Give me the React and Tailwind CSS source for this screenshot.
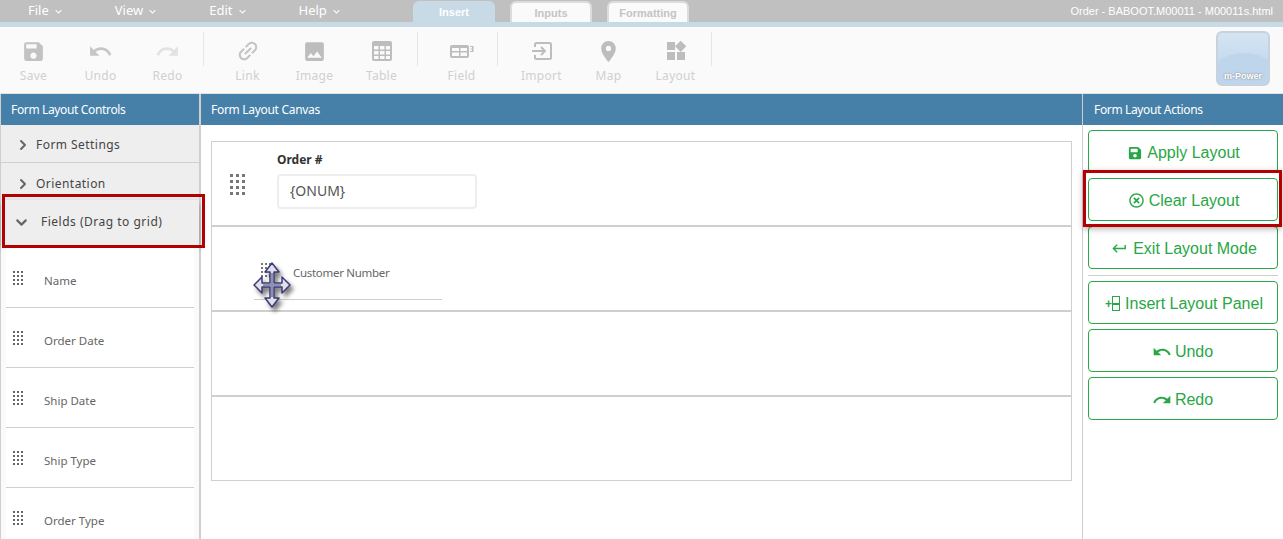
import { MdSave, MdUndo, MdRedo, MdLink, MdImage, MdPlace, MdWidgets, MdKeyboardReturn, MdKeyboardArrowDown } from 'react-icons/md';
import { FaSave, FaRegTimesCircle } from 'react-icons/fa';
import { FiChevronRight, FiChevronDown } from 'react-icons/fi';

const TableIcon = () => (
  <svg width="22" height="22" viewBox="0 0 22 22" fill="#bdbdbd">
    <path d="M3 1h16a2 2 0 0 1 2 2v16a2 2 0 0 1-2 2H3a2 2 0 0 1-2-2V3a2 2 0 0 1 2-2zm0 5v3.500h4.500V6zm6 0v3.500h4.500V6zm6 0v3.500h4V6zM3 11v3.500h4.500V11zm6 0v3.500h4.500V11zm6 0v3.500h4V11zM3 16v3h4.500v-3zm6 0v3h4.500v-3zm6 0v3h4v-3z" fillRule="evenodd" />
  </svg>
);

const FieldIcon = () => (
  <svg width="24" height="16" viewBox="0 0 24 16" fill="#bdbdbd">
    <path d="M2 2h15a2 2 0 0 1 2 2v9a2 2 0 0 1-2 2H2a2 2 0 0 1-2-2V4a2 2 0 0 1 2-2zm0 3v3h7V5zm8.500 0v3H17V5zM2 9.500V13h7V9.500zm8.500 0V13H17V9.500z" fillRule="evenodd" />
    <path d="M20 3h3.500v6H20V8h2V6.500h-1.500v-1H22V4h-2z" />
  </svg>
);

const ImportIcon = () => (
  <svg width="20" height="18" viewBox="0 0 20 18" fill="none" stroke="#bdbdbd" strokeWidth="2">
    <path d="M3 5V2.500A1.500 1.500 0 0 1 4.500 1h13A1.500 1.500 0 0 1 19 2.500v13a1.500 1.500 0 0 1-1.500 1.500h-13A1.500 1.500 0 0 1 3 15.500V13" />
    <path d="M0 9h12M9 5l4 4-4 4" />
  </svg>
);

// 3 columns, 4 rows of square dots
const Grip = ({ size = 2, gap = 2, color = 'bg-[#666]', className = '' }) => (
  <div className={`grid w-fit grid-cols-3 content-start self-start ${className}`} style={{ gap }}>
    {Array.from({ length: 12 }).map((_, i) => (
      <span key={i} className={color} style={{ width: size, height: size }} />
    ))}
  </div>
);

const groups = [
  [
    { label: 'Save', icon: <MdSave size={25} color="#c2c2c2" /> },
    { label: 'Undo', icon: <MdUndo size={25} color="#c6c6c6" /> },
    { label: 'Redo', icon: <MdRedo size={25} color="#e2e2e2" /> },
  ],
  [
    { label: 'Link', icon: <MdLink size={26} color="#c4c4c4" className="-rotate-45" /> },
    { label: 'Image', icon: <MdImage size={25} color="#bdbdbd" /> },
    { label: 'Table', icon: <TableIcon /> },
  ],
  [{ label: 'Field', icon: <FieldIcon /> }],
  [
    { label: 'Import', icon: <ImportIcon /> },
    { label: 'Map', icon: <MdPlace size={25} color="#bdbdbd" /> },
    { label: 'Layout', icon: <MdWidgets size={24} color="#bdbdbd" /> },
  ],
];

const fields = ['Name', 'Order Date', 'Ship Date', 'Ship Type', 'Order Type'];

const ActionButton = ({ icon, children }) => (
  <button className="flex h-[43px] w-[190px] items-center justify-center gap-[5px] rounded border border-[#28a745] bg-white pl-[2px] pt-[2px] text-[16px] text-[#28a745]">
    {icon}
    <span>{children}</span>
  </button>
);

const MoveCursor = () => (
  <svg width="40" height="46" viewBox="0 0 40 46" className="drop-shadow-[3px_4px_2px_rgba(0,0,0,0.5)]">
    <path d="M19 1L26 10H21V21H29V15L37 23L29 31V25H21V36H26L19 45L12 36H17V25H9V31L1 23L9 15V21H17V10H12Z" fill="#dfe0e8" stroke="#3b3b78" strokeWidth="1.500" strokeLinejoin="round" />
    <path d="M19 11V35M10 23H28" stroke="#8f8fb0" strokeWidth="2" />
  </svg>
);

export default function App() {
  return (
    <div className="relative h-[539px] w-[1283px] overflow-hidden bg-white font-['Noto_Sans',sans-serif]">
      {/* menu bar */}
      <div className="flex h-[22px] items-end justify-between bg-[#c0c0c0] pr-[10px]">
        <div className="flex items-end">
          <div className="flex h-[22px] w-[413px] items-center gap-[50px] pl-[28px] text-[13px] text-white">
            {['File', 'View', 'Edit', 'Help'].map((m) => (
              <span key={m} className="flex items-center gap-[3px]">
                {m}
                <MdKeyboardArrowDown size={13} />
              </span>
            ))}
          </div>
          <div className="flex gap-[15px] font-['Liberation_Sans',sans-serif] text-[11px] font-bold">
            <div className="flex h-[21px] w-[82px] items-center justify-center rounded-t-md bg-[#c8dae6] pt-px text-white">Insert</div>
            <div className="flex h-[21px] w-[82px] items-center justify-center rounded-t-md border-x-2 border-t-2 border-[#dcdcdc] bg-[#fafafa] pt-px text-[#c4c4c4]">Inputs</div>
            <div className="flex h-[21px] w-[82px] items-center justify-center rounded-t-md border-x-2 border-t-2 border-[#dcdcdc] bg-[#fafafa] pt-px text-[#c4c4c4]">Formatting</div>
          </div>
        </div>
        <div className="flex h-[22px] items-center font-['Liberation_Sans',sans-serif] text-[11px] text-white">Order - BABOOT.M00011 - M00011s.html</div>
      </div>
      <div className="h-[5px] bg-[#c8dae6]" />

      {/* toolbar */}
      <div className="flex h-[67px] items-start justify-between border-b border-[#e2e2e2] bg-[#fafafa] pr-[13px]">
        <div className="flex pt-[5px]">
          {groups.map((g, i) => (
            <div key={i} className="mr-[10px] flex h-[34px] border-r border-[#e6e6e6] pr-[2px]">
              {g.map((t) => (
                <div key={t.label} className="flex w-[67px] flex-col items-center">
                  <div className="flex h-[38px] shrink-0 items-center justify-center">{t.icon}</div>
                  <span className="-mt-[2px] shrink-0 text-[12px] leading-[16px] tracking-[0.3px] text-[#d0d0d0]">{t.label}</span>
                </div>
              ))}
            </div>
          ))}
        </div>
        <div className="relative mt-[4px] flex h-[55px] w-[54px] items-end justify-center overflow-hidden rounded-md border-2 border-[#c8d2dc] bg-gradient-to-b from-[#d4e4f2] to-[#bcd3ea] pb-[3px]">
          <div className="absolute left-[-12px] top-[20px] h-[60px] w-[76px] rounded-[50%] bg-[#bfd5eb]" />
          <span className="relative font-['Liberation_Sans',sans-serif] text-[9px] font-bold leading-[10px] text-white [text-shadow:0_0_2px_#777]">m-Power</span>
        </div>
      </div>

      {/* main */}
      <div className="flex h-[445px]">
        {/* left column */}
        <div className="w-[201px] shrink-0 border-r-2 border-l border-[#cfcfcf]">
          <div className="flex h-[31px] items-center bg-[#4680a9] pl-[10px] text-[12px] tracking-[-0.35px] text-white">Form Layout Controls</div>
          <div className="flex h-[38px] items-center gap-[5px] border-b border-[#cfcfcf] bg-[#eeeeee] pl-[14px] pt-[3px] text-[12px] tracking-[0.45px] text-[#444]">
            <FiChevronRight size={16} strokeWidth={3} color="#666" />
            Form Settings
          </div>
          <div className="flex h-[37px] items-center gap-[5px] bg-[#eeeeee] pl-[14px] pt-[5px] text-[12px] tracking-[0.45px] text-[#444]">
            <FiChevronRight size={16} strokeWidth={3} color="#666" />
            Orientation
          </div>
          <div className="flex h-[45px] items-center gap-[11px] bg-[#eeeeee] pb-[1px] pl-[12px] text-[12px] tracking-[0.5px] text-[#444] shadow-[0_3px_6px_rgba(0,0,0,0.35)]">
            <FiChevronDown size={17} strokeWidth={3} color="#666" />
            Fields (Drag to grid)
          </div>
          <div className="bg-[#fafafa] px-[5px] pt-[3px]">
            {fields.map((f) => (
              <div key={f} className="flex h-[60px] gap-[21px] border-b border-[#cfcfcf] bg-white pl-[7px] pt-[23px]">
                <Grip />
                <span className="mt-[1px] text-[11.5px] text-[#666]">{f}</span>
              </div>
            ))}
          </div>
        </div>

        {/* center column */}
        <div className="flex-1">
          <div className="flex h-[31px] items-center bg-[#4680a9] pl-[10px] text-[12px] tracking-[-0.3px] text-white">Form Layout Canvas</div>
          <div className="px-[10px] pt-[16px]">
            <div className="w-[861px] border border-[#cfcfcf]">
              <div className="flex h-[85px] border-b-2 border-[#cfcfcf] pl-[18px]">
                <Grip size={3} gap={3} color="bg-[#777]" className="mt-[32px]" />
                <div className="ml-[32px] pt-[9px]">
                  <div className="text-[12px] font-bold leading-[18px] text-[#333]">Order #</div>
                  <div className="mt-[5px] flex h-[35px] w-[200px] items-center rounded border-2 border-[#eeeeee] pb-[3px] pl-[11px] text-[14px] text-[#555]">{'{ONUM}'}</div>
                </div>
              </div>
              <div className="h-[85px] border-b-2 border-[#cfcfcf] pl-[42px] pt-[37px]">
                <div className="h-[36px] w-[188px] border-b border-[#cfcfcf] pl-[39px] text-[11.5px] leading-[18px] tracking-[-0.3px] text-[#666]">Customer Number</div>
              </div>
              <div className="h-[85px] border-b-2 border-[#cfcfcf]" />
              <div className="h-[83px]" />
            </div>
          </div>
        </div>

        {/* right column */}
        <div className="w-[201px] shrink-0 border-l border-[#cfcfcf]">
          <div className="flex h-[31px] items-center bg-[#4680a9] pl-[11px] text-[12px] tracking-[-0.35px] text-white">Form Layout Actions</div>
          <div className="flex flex-col gap-[5px] pl-[5px] pt-[5px] font-['Liberation_Sans',sans-serif]">
            <ActionButton icon={<FaSave size={14} />}>Apply Layout</ActionButton>
            <ActionButton icon={<FaRegTimesCircle size={15} />}>Clear Layout</ActionButton>
            <ActionButton icon={<MdKeyboardReturn size={17} />}>Exit Layout Mode</ActionButton>
            <div className="mt-px h-px w-[190px] bg-[#cfcfcf]" />
            <ActionButton
              icon={
                <span className="flex items-center text-[12px] font-bold leading-none">
                  +
                  <span className="h-[15px] w-[8px] border border-[#28a745] bg-[linear-gradient(#28a745,#28a745)] bg-[length:100%_2px] bg-center bg-no-repeat" />
                </span>
              }
            >
              Insert Layout Panel
            </ActionButton>
            <ActionButton icon={<MdUndo size={20} className="-mr-[5px] -translate-x-[3px]" />}>Undo</ActionButton>
            <ActionButton icon={<MdRedo size={20} className="-mr-[5px] -translate-x-[3px]" />}>Redo</ActionButton>
          </div>
        </div>
      </div>

      {/* annotations on top of the page */}
      <div className="pointer-events-none absolute left-[2px] top-[194px] h-[54px] w-[203px] border-[3px] border-[#b30000]" />
      <div className="pointer-events-none absolute left-[1083px] top-[170px] h-[57px] w-[199px] border-[3px] border-[#b30000] shadow-[0_2px_6px_rgba(0,0,0,0.3)]" />
      <div className="absolute left-[261px] top-[263px]">
        <Grip color="bg-[#777]" />
      </div>
      <div className="absolute left-[253px] top-[262px]">
        <MoveCursor />
      </div>
    </div>
  );
}
